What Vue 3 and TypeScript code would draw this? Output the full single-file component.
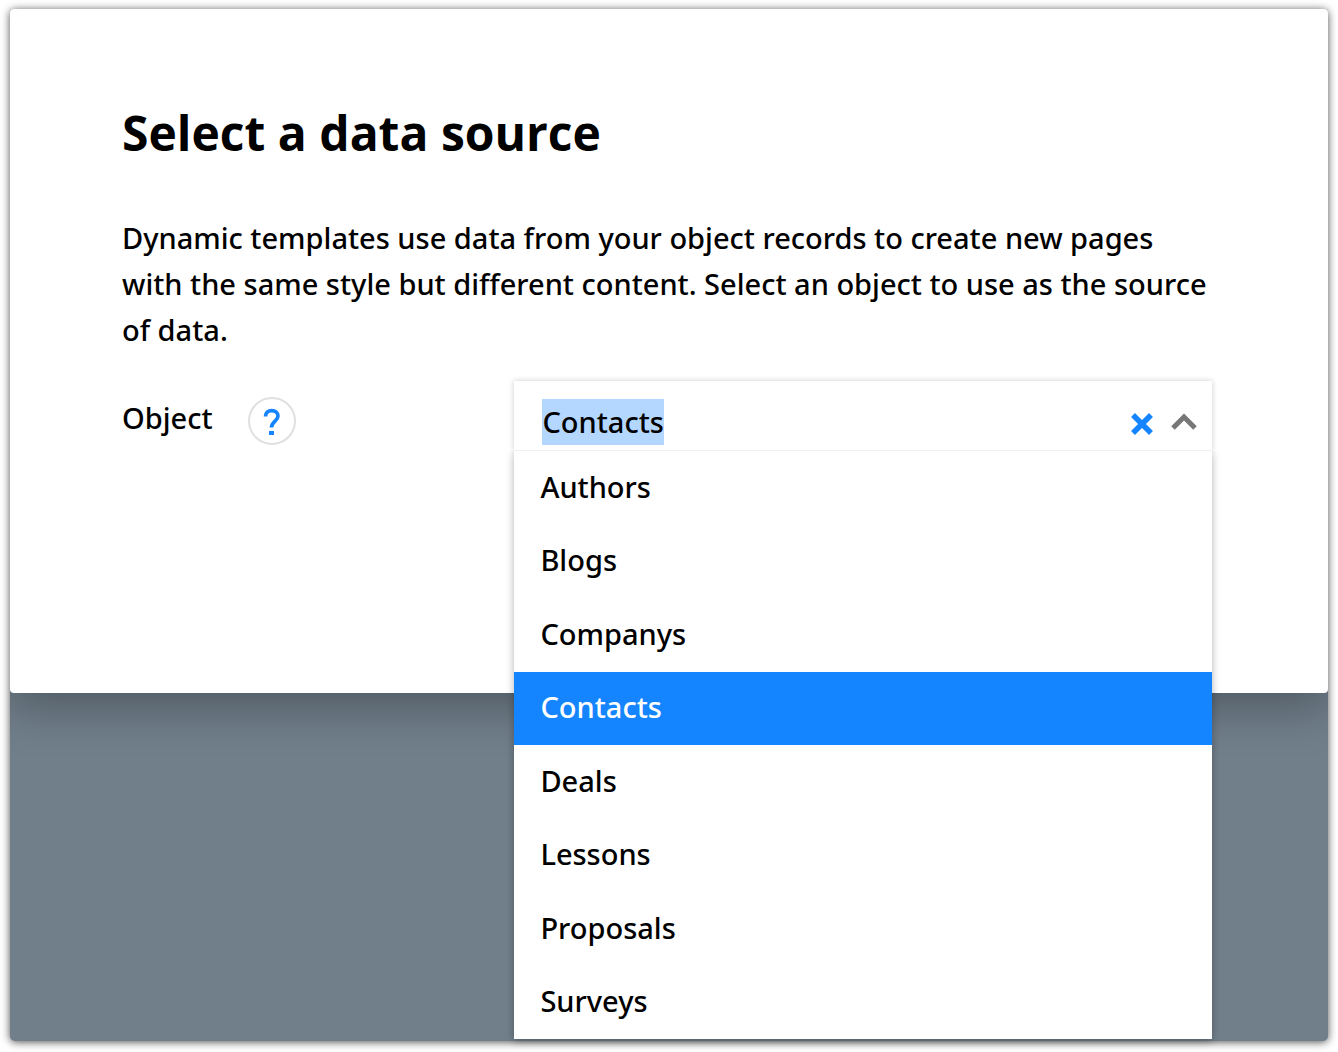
<script setup lang="ts">
import { onMounted, ref } from 'vue'

const objects: string[] = [
  'Authors',
  'Blogs',
  'Companys',
  'Contacts',
  'Deals',
  'Lessons',
  'Proposals',
  'Surveys',
]

const selected = ref('Contacts')
const query = ref('Contacts')
const open = ref(true)
const field = ref<HTMLInputElement | null>(null)

function choose(name: string): void {
  selected.value = name
  query.value = name
  open.value = false
}

function clear(): void {
  selected.value = ''
  query.value = ''
  field.value?.focus()
}

onMounted(() => {
  field.value?.focus()
  field.value?.select()
})
</script>

<template>
  <div class="backdrop">
    <main class="dialog" role="dialog" aria-labelledby="dialog-title">
      <h1 id="dialog-title" class="title">Select a data source</h1>
      <p class="intro">
        Dynamic templates use data from your object records to create new pages with the same
        style but different content. Select an object to use as the source of data.
      </p>
      <div class="row">
        <div class="row-label">
          <label for="object-field">Object</label>
          <button class="help" type="button" aria-label="Help">
            <svg width="18" height="28" viewBox="0 0 18 28" aria-hidden="true">
              <path
                d="M2.500 9.500C2.500 5.800 5 3.700 8.700 3.700s6.300 2.100 6.300 5.400c0 4.800-6.500 5.400-6.500 11.400"
                fill="none"
                stroke="currentColor"
                stroke-width="3.700"
              />
              <rect x="6" y="24" width="5" height="4" fill="currentColor" />
            </svg>
          </button>
        </div>
        <div class="select">
          <div class="control">
            <input
              id="object-field"
              ref="field"
              v-model="query"
              class="field"
              type="text"
              role="combobox"
              aria-controls="object-list"
              :aria-expanded="open"
              autocomplete="off"
              spellcheck="false"
            />
            <button class="icon clear" type="button" aria-label="Clear" @click="clear">
              <svg width="24" height="24" viewBox="0 0 24 24" aria-hidden="true">
                <path d="M3 3l18 18M21 3L3 21" stroke="currentColor" stroke-width="5.500" />
              </svg>
            </button>
            <button class="icon toggle" type="button" aria-label="Toggle list" @click="open = !open">
              <svg width="26" height="22" viewBox="0 0 26 22" aria-hidden="true">
                <path d="M2 15L13 4l11 11" fill="none" stroke="currentColor" stroke-width="5" />
              </svg>
            </button>
          </div>
          <div v-if="open" id="object-list" class="list" role="listbox" aria-label="Object">
            <button
              v-for="name in objects"
              :key="name"
              class="option"
              :class="{ active: name === selected }"
              type="button"
              role="option"
              :aria-selected="name === selected"
              @click="choose(name)"
            >
              {{ name }}
            </button>
          </div>
        </div>
      </div>
    </main>
  </div>
</template>

<style>
body {
  background: #fff;
}
</style>

<style scoped>
.backdrop {
  box-sizing: border-box;
  display: flow-root;
  min-height: calc(100vh - 20px);
  margin: 9px 10px 11px;
  border-radius: 5px;
  background: #717f8b;
  box-shadow: 0 1px 8px rgba(0, 0, 0, 0.7);
  color: #000;
  font: 500 29px/46px 'Noto Sans', 'Open Sans', sans-serif;
}

.dialog {
  box-sizing: border-box;
  min-height: 684px;
  padding: 88px 116px 88px 112px;
  border-radius: 4px;
  background: #fff;
  box-shadow: 0 10px 48px 4px rgba(0, 0, 0, 0.3);
  clip-path: inset(0 0 -400px 0);
}

.title {
  margin: 0 0 46px;
  font-family: 'Open Sans', sans-serif;
  font-size: 48px;
  font-weight: 700;
  line-height: 72px;
}

.intro {
  margin: 0 0 28px;
}

.row {
  display: grid;
  grid-template-columns: 9fr 16fr;
  align-items: start;
}

.row-label {
  display: flex;
  align-items: flex-start;
  gap: 35px;
  padding-top: 14px;
}

.help {
  display: flex;
  align-items: center;
  justify-content: center;
  width: 48px;
  height: 48px;
  margin-top: 2px;
  padding: 0;
  border: 2px solid #e0e0e0;
  border-radius: 50%;
  background: #fff;
  color: #1585ff;
}

.select {
  position: relative;
}

.control {
  display: flex;
  align-items: center;
  height: 70px;
  padding: 0 15px 0 28px;
  box-sizing: border-box;
  background: #fff;
  box-shadow:
    inset 0 -1px #f0f0f0,
    0 0 6px rgba(0, 0, 0, 0.2);
}

.field {
  flex: 1;
  min-width: 0;
  height: 46px;
  margin-top: 12px;
  padding: 0;
  border: 0;
  outline: 0;
  background: transparent;
  color: #000;
  font: inherit;
}

.field::selection {
  background: #b3d7ff;
  color: #000;
}

.icon {
  display: flex;
  margin-top: 16px;
  padding: 0;
  border: 0;
  background: transparent;
}

.clear {
  margin-right: 17px;
  color: #1585ff;
}

.toggle {
  color: #777;
}

.list {
  position: absolute;
  top: 100%;
  right: 0;
  left: 0;
  display: grid;
  grid-auto-rows: 1fr;
  min-height: 588px;
  background: #fff;
  box-shadow: 0 2px 8px rgba(0, 0, 0, 0.3);
  clip-path: inset(0 -16px -16px -16px);
}

.option {
  padding: 0 26px 2px;
  border: 0;
  background: transparent;
  color: #000;
  font: inherit;
  text-align: left;
}

.option.active {
  background: #1585ff;
  color: #fff;
}
</style>
